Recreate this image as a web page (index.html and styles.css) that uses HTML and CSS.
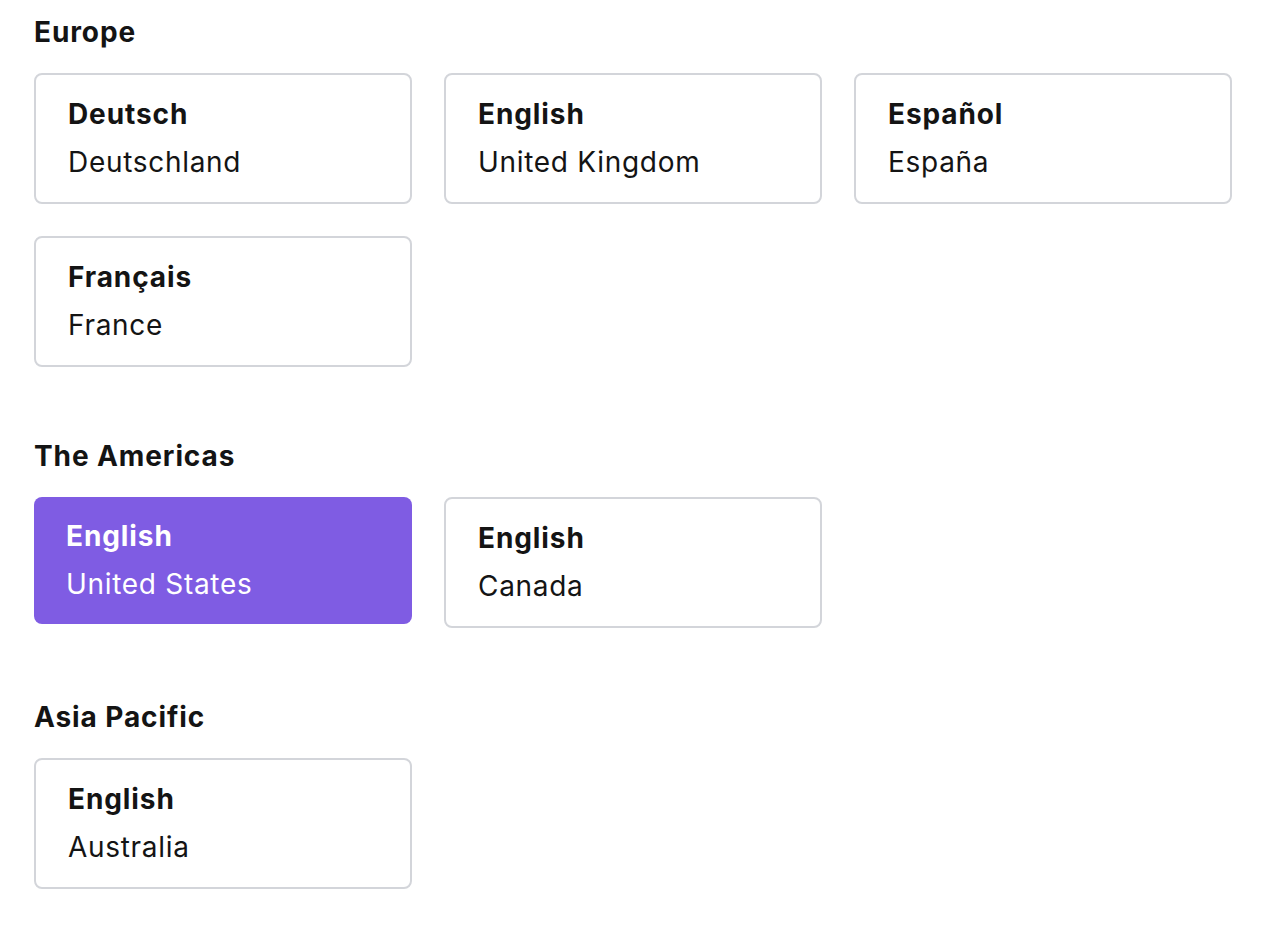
FILE: index.html
```html
<!DOCTYPE html>
<html lang="en">
<head>
<meta charset="utf-8">
<title>Choose your region</title>
<link rel="stylesheet" href="styles.css">
</head>
<body>
<main class="page">
  <section class="region">
    <h2 class="region-title">Europe</h2>
    <div class="grid">
      <a class="card" href="#"><span class="lang">Deutsch</span><span class="country">Deutschland</span></a>
      <a class="card" href="#"><span class="lang">English</span><span class="country">United Kingdom</span></a>
      <a class="card" href="#"><span class="lang">Español</span><span class="country">España</span></a>
      <a class="card" href="#"><span class="lang">Français</span><span class="country">France</span></a>
    </div>
  </section>
  <section class="region">
    <h2 class="region-title">The Americas</h2>
    <div class="grid">
      <a class="card card-active" href="#"><span class="lang">English</span><span class="country">United States</span></a>
      <a class="card" href="#"><span class="lang">English</span><span class="country">Canada</span></a>
    </div>
  </section>
  <section class="region">
    <h2 class="region-title">Asia Pacific</h2>
    <div class="grid">
      <a class="card" href="#"><span class="lang">English</span><span class="country">Australia</span></a>
    </div>
  </section>
</main>
</body>
</html>
```
FILE: styles.css
```css
* { box-sizing: border-box; }
html, body { margin: 0; background: #ffffff; }
body {
  font-family: Inter, "Noto Sans", "Liberation Sans", sans-serif;
  color: #141414;
  font-size: 28px;
  line-height: 48px;
}
.page {
  width: 1198px;
  margin-left: 34px;
  padding-top: 8px;
  display: flex;
  flex-direction: column;
  gap: 65px;
}
.region-title {
  margin: 0 0 17px 0;
  font-size: 28px;
  line-height: 48px;
  font-weight: 700;
  letter-spacing: 0.9px;
}
.grid {
  display: grid;
  grid-template-columns: repeat(3, 1fr);
  column-gap: 32px;
  row-gap: 32px;
  align-items: start;
}
.card {
  display: flex;
  flex-direction: column;
  border: 2px solid #d3d5da;
  border-radius: 8px;
  padding: 15px 32px 16px 32px;
  color: #141414;
  text-decoration: none;
}
.card-active {
  border: none;
  background: #7f5ce3;
  color: #ffffff;
  padding: 15px 32px 16px 32px;
}
.lang {
  font-weight: 700;
  letter-spacing: 0.9px;
}
.country {
  font-weight: 400;
  letter-spacing: 0.7px;
}
```
